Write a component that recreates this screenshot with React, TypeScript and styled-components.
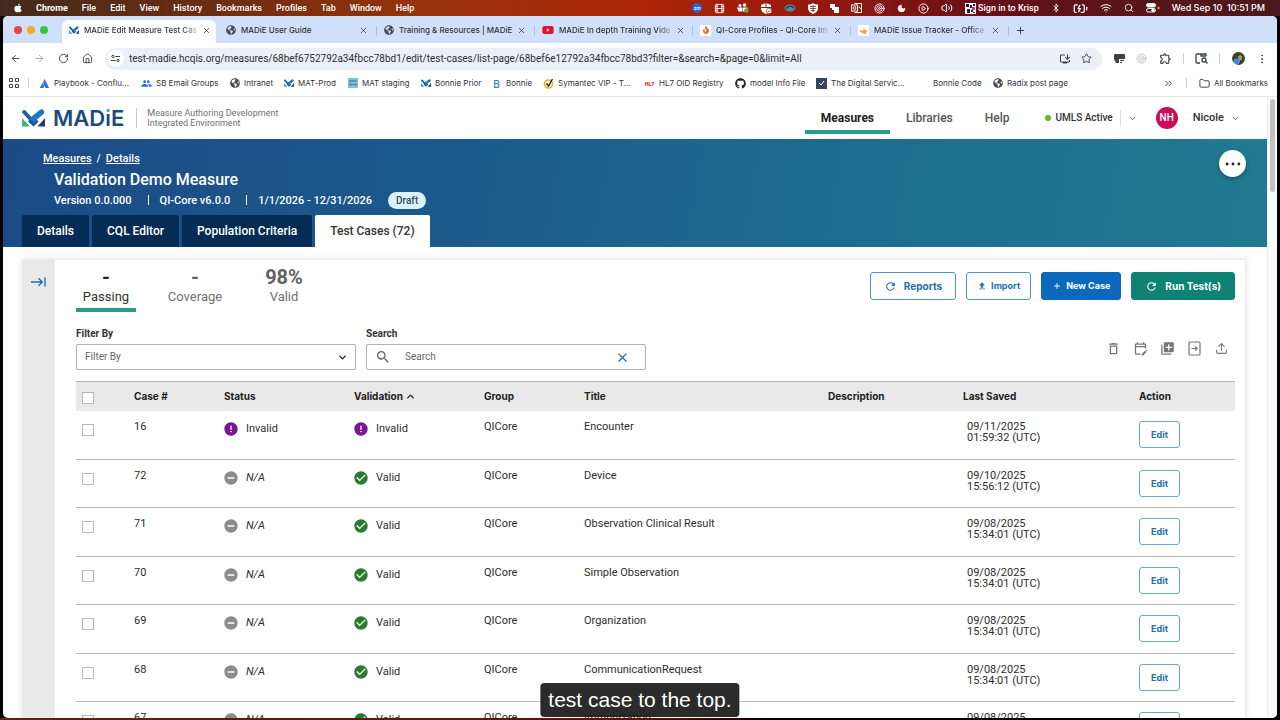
import React from "react";
import styled, { createGlobalStyle, css } from "styled-components";
import {
  ArrowLeft, ArrowRight, RotateCw, House, Star, EllipsisVertical, X, Plus,
  ChevronDown, ChevronUp, ChevronsRight, Folder, Search, Moon, CirclePlay, Volume2, Bluetooth,
  BatteryCharging, Wifi, Film, Upload, Ellipsis, Target,
} from "lucide-react";
import { FaApple, FaGithub, FaYoutube, FaFire, FaGlobeAmericas, FaAtlassian } from "react-icons/fa";
import {
  MdRefresh, MdUpload, MdOutlineDelete, MdOutlineEditCalendar, MdLibraryAdd, MdSearch,
  MdError, MdCheckCircle, MdRemoveCircle, MdAdd, MdGroup, MdClose, MdOutlineExtension,
  MdOutlineInstallDesktop,
} from "react-icons/md";

const ui = `Inter, "Liberation Sans", sans-serif`;
const app = `Roboto, "Liberation Sans", sans-serif`;

const GlobalStyle = createGlobalStyle`
  *, *::before, *::after { box-sizing: border-box; }
  body { margin: 0; background: #000; font-family: ${app}; color: #333; }
  button, input, select { font: inherit; color: inherit; margin: 0; }
  button { padding: 0; border: 0; background: none; cursor: pointer; }
  a { color: inherit; text-decoration: none; }
  svg { display: block; flex: none; }
`;

/* ---------- desktop ---------- */

const Screen = styled.div`
  position: relative;
  height: 100vh;
  display: flex;
  flex-direction: column;
  overflow: hidden;
  padding-bottom: 2px;
  background: linear-gradient(90deg, #5c2416, #5c1010 50%, #000 61%);
`;

const MenuBar = styled.div`
  flex: none;
  height: 16px;
  display: flex;
  align-items: center;
  justify-content: space-between;
  padding: 0 15px 0 13px;
  font: 500 9px/16px ${app};
  color: #fff;
  background: linear-gradient(90deg, #43291d, #6b2d12 16%, #96330c 33%, #ad2505 50%, #9a1a0c 62%, #641018 78%, #4a1a1c);
`;

const MenuGroup = styled.div<{ $gap: number }>`
  display: flex;
  align-items: center;
  gap: ${(p) => p.$gap}px;
`;

const MenuName = styled.span`
  font-weight: 700;
`;

const Clock = styled.time`
  font-family: ${ui};
`;

const ZoomBadge = styled.span`
  width: 10px;
  height: 10px;
  border-radius: 5px;
  background: #2463d8;
  font-size: 5px;
  line-height: 10px;
  text-align: center;
`;

const Krisp = styled.span`
  display: flex;
  align-items: center;
  gap: 2px;
`;

const Desktop = styled.div`
  flex: 1;
  min-height: 0;
  display: flex;
  padding: 0 3px;
  background: #000;
`;

const BrowserWindow = styled.div`
  flex: 1;
  min-width: 0;
  display: flex;
  flex-direction: column;
  overflow: hidden;
  border-radius: 5px;
  background: #fff;
  font-family: ${ui};
`;

/* ---------- browser chrome ---------- */

const TabStrip = styled.div`
  flex: none;
  height: 27px;
  display: flex;
  align-items: stretch;
  padding-top: 4px;
  background: #d0dffa;
`;

const Lights = styled.div`
  display: flex;
  align-items: center;
  gap: 5px;
  width: 59px;
  padding: 0 0 4px 11px;
`;

const Light = styled.span<{ $color: string }>`
  width: 8px;
  height: 8px;
  border-radius: 4px;
  background: ${(p) => p.$color};
`;

const Tab = styled.div<{ $active?: boolean }>`
  flex: 0 1 158px;
  min-width: 0;
  display: flex;
  align-items: center;
  gap: 5px;
  padding: 0 9px 3px 7px;
  font: 500 8px/12px ${ui};
  color: #30343a;
  background: linear-gradient(#a9bfe6, #a9bfe6) right 6px / 1px 10px no-repeat;
  ${(p) => p.$active && css`
    flex-basis: 154px;
    margin-right: 3px;
    padding-right: 7px;
    border-radius: 6px 6px 0 0;
    background: #fff;
  `}
`;

const TabTitle = styled.span<{ $fade?: boolean }>`
  white-space: nowrap;
  ${(p) => p.$fade && css`mask-image: linear-gradient(90deg, #000 88%, rgba(0, 0, 0, 0.2));`}
`;

const CloseTab = styled.button`
  display: flex;
  margin-left: auto;
`;

const NewTab = styled.button`
  display: flex;
  align-items: center;
  padding: 0 6px 3px;
  color: #333;
`;

const Toolbar = styled.div`
  flex: none;
  height: 31px;
  display: flex;
  align-items: center;
  padding: 0 9px 0 7px;
  color: #3c4043;
`;

const NavButtons = styled.div`
  display: flex;
  gap: 13px;
  width: 95px;
`;

const ToolButton = styled.button<{ $dim?: boolean }>`
  display: flex;
  opacity: ${(p) => (p.$dim ? 0.5 : 1)};
`;

const Omnibox = styled.div`
  flex: 1;
  min-width: 0;
  height: 22px;
  display: flex;
  align-items: center;
  gap: 10px;
  padding: 0 10px 0 2px;
  border-radius: 11px;
  background: #ebf0f8;
`;

const SiteInfo = styled.button`
  display: grid;
  place-items: center;
  width: 17px;
  height: 17px;
  margin-right: -5px;
  border-radius: 9px;
  background: #fff;
`;

const UrlInput = styled.input`
  flex: 1;
  min-width: 0;
  border: 0;
  padding: 0;
  outline: 0;
  background: none;
  font: 10px/14px ${app};
  color: #2b2f33;
`;

const Extensions = styled.div`
  display: flex;
  align-items: center;
  justify-content: space-between;
  width: 154px;
  margin-left: 12px;
`;

const Divider = styled.span<{ $h: number; $color?: string }>`
  flex: none;
  width: 1px;
  height: ${(p) => p.$h}px;
  background: ${(p) => p.$color ?? "#c4d3ee"};
`;

const Profile = styled.span`
  width: 13px;
  height: 13px;
  border-radius: 7px;
  background: radial-gradient(circle at 35% 75%, #4a86d8 0 25%, transparent 26%), radial-gradient(circle at 62% 45%, #b98a6c 0 22%, transparent 23%), #33462c;
`;

const BookmarkBar = styled.div`
  flex: none;
  height: 23px;
  display: flex;
  align-items: center;
  padding: 0 9px 4px 6px;
  border-bottom: 1px solid #e3e5e8;
  font-size: 8px;
  line-height: 12px;
  color: #30343a;
  white-space: nowrap;
`;

const Bookmark = styled.a<{ $w?: number }>`
  flex: none;
  display: flex;
  align-items: center;
  gap: 4px;
  width: ${(p) => (p.$w ? `${p.$w}px` : "auto")};
`;

const BookmarkIcon = styled.span`
  display: grid;
  place-items: center;
  width: 11px;
  height: 11px;
`;

const LetterMark = styled.span<{ $color: string; $small?: boolean }>`
  font-weight: ${(p) => (p.$small ? 800 : 500)};
  font-size: ${(p) => (p.$small ? 5 : 10)}px;
  color: ${(p) => p.$color};
`;

const SquareMark = styled.span<{ $color: string }>`
  display: grid;
  place-items: center;
  width: 11px;
  height: 11px;
  background: ${(p) => p.$color};
  color: #fff;
`;

const BookmarkEnd = styled.div`
  display: flex;
  align-items: center;
  gap: 12px;
  margin-left: auto;
`;

/* ---------- page ---------- */

const Viewport = styled.div`
  flex: 1;
  min-height: 0;
  display: flex;
  font-family: ${app};
`;

const Page = styled.div`
  flex: 1;
  min-width: 0;
  overflow: hidden;
`;

const ScrollTrack = styled.div`
  width: 10px;
  padding: 2px 2px 0;
  border-left: 1px solid #ececec;
  background: #fafafa;
`;

const ScrollThumb = styled.div`
  height: 93px;
  border-radius: 3px;
  background: #c1c1c1;
`;

const Header = styled.header`
  height: 42px;
  display: flex;
  align-items: center;
  padding: 0 27px 0 19px;
`;

const Brand = styled.a`
  display: flex;
  align-items: center;
  gap: 8px;
  font: 600 22px/24px ${ui};
  color: #1e4b7e;
`;

const BrandI = styled.span`
  color: transparent;
  background: linear-gradient(#2ba898 9px, #1e4b7e 9px);
  background-clip: text;
`;

const Tagline = styled.p`
  margin: 0 auto 0 12px;
  padding-left: 10px;
  border-left: 1px solid #c9c9c9;
  font-size: 9px;
  line-height: 10px;
  color: #707070;
`;

const MainNav = styled.nav`
  display: flex;
  height: 100%;
`;

const NavLink = styled.a<{ $active?: boolean }>`
  height: 37px;
  padding: 14px 16px 0;
  font-size: 12px;
  line-height: 14px;
  font-weight: ${(p) => (p.$active ? 700 : 500)};
  color: ${(p) => (p.$active ? "#222" : "#555")};
  border-bottom: 4px solid ${(p) => (p.$active ? "#2b9b8a" : "transparent")};
`;

const UserArea = styled.div`
  display: flex;
  align-items: center;
  gap: 7px;
  margin-left: 20px;
  font-size: 11px;
  font-weight: 500;
  line-height: 14px;
`;

const UserStatus = styled.span`
  display: flex;
  align-items: center;
  gap: 4px;
  font-size: 10px;
`;

const StatusDot = styled.span`
  width: 6px;
  height: 6px;
  border-radius: 3px;
  background: #68b42e;
`;

const Avatar = styled.span`
  width: 22px;
  height: 22px;
  margin: 0 8px 0 12px;
  border-radius: 11px;
  background: #c90d58;
  color: #fff;
  font-size: 10px;
  line-height: 22px;
  text-align: center;
`;

const Hero = styled.section`
  height: 108px;
  display: flex;
  flex-direction: column;
  padding: 12px 21px 0 19px;
  color: #fff;
  background: linear-gradient(100deg, #1c4a86, #1b5a8b 35%, #1d698f 60%, #217a92);
`;

const HeroTop = styled.div`
  display: flex;
  justify-content: space-between;
`;

const HeroText = styled.div`
  padding-left: 32px;
`;

const Crumbs = styled.nav`
  display: flex;
  gap: 5px;
  margin-left: -11px;
  font-size: 11px;
  line-height: 15px;
  font-weight: 500;
  a { text-decoration: underline; }
`;

const Title = styled.h1`
  margin: 4px 0 1px;
  font-size: 16px;
  line-height: 20px;
  font-weight: 500;
`;

const Meta = styled.div`
  display: flex;
  align-items: center;
  gap: 16px;
  font-size: 11px;
  line-height: 19px;
  font-weight: 500;
  white-space: nowrap;
`;

const MetaItem = styled.span`
  & + & { padding-left: 12px; background: linear-gradient(#fff, #fff) left 4px / 1px 10px no-repeat; }
`;

const Draft = styled.span`
  height: 17px;
  padding: 0 8px;
  border-radius: 9px;
  background: #daf2fb;
  color: #3a4a55;
  font-size: 10px;
  line-height: 17px;
`;

const MoreButton = styled.button`
  display: grid;
  place-items: center;
  width: 27px;
  height: 27px;
  margin-top: -1px;
  border-radius: 14px;
  background: #fff;
  color: #222;
  box-shadow: 0 2px 4px rgba(0, 0, 0, 0.3);
`;

const PageTabs = styled.div`
  display: flex;
  gap: 3px;
  margin-top: auto;
`;

const PageTab = styled.button<{ $active?: boolean }>`
  height: 32px;
  padding: 0 15px;
  border-radius: 2px 2px 0 0;
  font-size: 12px;
  line-height: 14px;
  font-weight: 500;
  color: ${(p) => (p.$active ? "#333" : "#fff")};
  background: ${(p) => (p.$active ? "#fff" : "#052c55")};
`;

const Card = styled.main`
  display: flex;
  margin: 12px 21px 0 19px;
  border: 1px solid #ebebeb;
  border-left: 0;
  box-shadow: 0 0 8px rgba(0, 0, 0, 0.1);
`;

const Rail = styled.aside`
  width: 33px;
  padding: 15px 8px 0;
  background: #e9e9e9;
`;

const Body = styled.div`
  flex: 1;
  min-width: 0;
  display: flex;
  flex-direction: column;
  gap: 16px;
  padding: 7px 10px 0 21px;
`;

const Row = styled.div`
  display: flex;
  justify-content: space-between;
  align-items: flex-start;
`;

const Stats = styled.div`
  display: flex;
  gap: 29px;
`;

const Stat = styled.button<{ $active?: boolean }>`
  width: 60px;
  font-size: 13px;
  line-height: 18px;
  text-align: center;
  color: ${(p) => (p.$active ? "#333" : "#707070")};
  border-bottom: 4px solid ${(p) => (p.$active ? "#2b9b8a" : "transparent")};
  padding-bottom: 2px;
  strong { display: block; font-size: 20px; line-height: 20px; padding-bottom: 1px; color: ${(p) => (p.$active ? "#222" : "#626262")}; }
`;

const Actions = styled.div`
  display: flex;
  gap: 10px;
  padding-top: 5px;
`;

const ActionButton = styled.button<{ $tone?: "blue" | "green"; $large?: boolean }>`
  height: 28px;
  display: flex;
  align-items: center;
  gap: ${(p) => (p.$large ? 7 : 4)}px;
  padding: 0 ${(p) => (p.$large ? 13 : 10)}px;
  border: 1px solid ${(p) => (p.$tone === "blue" ? "#0a68bd" : p.$tone === "green" ? "#0f8275" : "#4f95d0")};
  border-radius: 3px;
  background: ${(p) => (p.$tone === "blue" ? "#0a68bd" : p.$tone === "green" ? "#0f8275" : "#fff")};
  color: ${(p) => (p.$tone ? "#fff" : "#2070b4")};
  font: 700 ${(p) => (p.$large ? 10 : 9)}px/14px ${ui};
`;

const Filters = styled.div`
  display: flex;
  gap: 10px;
`;

const Field = styled.div`
  width: 280px;
  label { display: block; font-size: 10px; line-height: 12px; font-weight: 700; margin-bottom: 4px; }
`;

const Box = styled.div`
  height: 26px;
  display: flex;
  align-items: center;
  padding: 0 7px 0 8px;
  border: 1px solid #b0b0b0;
  border-radius: 2px;
  font-size: 10px;
  line-height: 14px;
  color: #666;
`;

const FilterSelect = styled.select`
  flex: 1;
  appearance: none;
  border: 0;
  outline: 0;
  background: none;
`;

const SearchInput = styled.input`
  flex: 1;
  min-width: 0;
  margin-left: 14px;
  padding: 0;
  border: 0;
  outline: 0;
  background: none;
  &::placeholder { color: #666; opacity: 1; }
`;

const ClearButton = styled.button`
  display: flex;
  margin-right: 8px;
  color: #2070b4;
`;

const IconTools = styled.div`
  display: flex;
  gap: 12px;
  padding: 13px 6px 0 0;
  color: #757575;
`;

const IconButton = styled.button`
  display: grid;
  place-items: center;
  width: 15px;
  height: 15px;
`;

const Table = styled.table`
  width: 100%;
  margin-top: -5px;
  table-layout: fixed;
  border-collapse: separate;
  border-spacing: 0;
  border-top: 1px solid #b5b5b5;
  text-align: left;
  font-size: 11px;
  line-height: 14px;
  color: #2d2d2d;
`;

const Th = styled.th<{ $w?: number; $top?: number }>`
  width: ${(p) => (p.$w ? `${p.$w}px` : "auto")};
  height: 29px;
  padding: ${(p) => p.$top ?? 7}px 0 0 8px;
  vertical-align: top;
  background: #e9e9e9;
  font: 700 10px/14px ${ui};
  color: #222;
`;

const Sort = styled.span`
  display: flex;
  align-items: center;
  gap: 2px;
`;

const BodyRow = styled.tr`
  height: 49px;
  &:nth-child(even) { height: 48px; }
`;

const Td = styled.td<{ $top?: number }>`
  padding: ${(p) => p.$top ?? 9}px 0 0 8px;
  vertical-align: top;
  border-bottom: 1px solid #b9b9b9;
`;

const Check = styled.input`
  appearance: none;
  display: block;
  width: 12px;
  height: 12px;
  margin-left: -2px;
  border: 1px solid #b3b8c2;
  background: #fff;
`;

const Flag = styled.span<{ $na?: boolean }>`
  display: flex;
  align-items: center;
  gap: 7px;
  margin-left: -1px;
  line-height: 16px;
  font-style: ${(p) => (p.$na ? "italic" : "normal")};
`;

const Saved = styled.time`
  display: block;
  padding-left: 4px;
  line-height: 11px;
`;

const EditButton = styled.button`
  width: 41px;
  height: 27px;
  border: 1px solid #6aa6da;
  border-radius: 3px;
  background: #fff;
  color: #2070b4;
  font: 700 9px/12px ${ui};
`;

const Caption = styled.div`
  position: absolute;
  left: 50%;
  bottom: 3px;
  transform: translateX(-50%);
  padding: 4px 8px;
  border-radius: 4px;
  background: rgba(32, 32, 32, 0.95);
  color: #fff;
  font: 21px/26px "Liberation Sans", sans-serif;
  white-space: nowrap;
`;

const MadieMark = ({ width = 11 }: { width?: number }) => (
  <svg width={width} height={Math.round(width * 0.78)} viewBox="0 0 23 18" aria-hidden="true">
    <path d="M2.200 3 10 11.500" stroke="#1e5fa8" strokeWidth="4" strokeLinecap="round" />
    <path d="M10.500 10.500 19.500 3.200" stroke="#1d74c9" strokeWidth="5.500" strokeLinecap="round" />
    <path d="M0 9v8.500h8z" fill="#3bb58c" />
    <path d="M7 11.500l4.500 4 4-4" stroke="#1d4f96" strokeWidth="3" fill="none" />
    <path d="M23 9v8.500h-7.500z" fill="#1d3f74" />
  </svg>
);

const SiteTune = () => (
  <svg width="9" height="9" viewBox="0 0 9 9" fill="none" stroke="#3c4043" aria-hidden="true">
    <circle cx="2" cy="2.500" r="1.200" /><path d="M4.500 2.500H9M0 6.500h4.500" /><circle cx="7" cy="6.500" r="1.200" />
  </svg>
);

const GridIcon = () => (
  <svg width="10" height="10" viewBox="0 0 10 10" fill="none" stroke="#444" aria-hidden="true">
    <path d="M.5.5h3v3h-3zM6.500.5h3v3h-3zM.5 6.500h3v3h-3zM6.500 6.500h3v3h-3z" />
  </svg>
);

const ExpandIcon = () => (
  <svg width="16" height="14" viewBox="0 0 16 14" fill="none" stroke="#2070b4" strokeWidth="1.400" aria-hidden="true">
    <path d="M1 7h11M8.500 3.200 12.300 7 8.500 10.800M15 2.500v9" />
  </svg>
);

const CopyToIcon = () => (
  <svg width="13" height="15" viewBox="0 0 13 15" fill="none" stroke="currentColor" strokeWidth="1.200" aria-hidden="true">
    <rect x="1" y="1" width="11" height="13" rx="1" /><path d="M3.500 7.500h5.500M7 5.300l2.200 2.200L7 9.700" />
  </svg>
);

const ControlCenter = () => (
  <svg width="14" height="10" viewBox="0 0 14 10" fill="none" stroke="#fff" aria-hidden="true">
    <rect x=".5" y=".5" width="9" height="3.500" rx="1.700" fill="#fff" /><rect x=".5" y="5.500" width="9" height="3.500" rx="1.700" /><circle cx="7" cy="7.200" r="1.200" fill="#fff" />
    <circle cx="12.500" cy="5" r="1.300" fill="#f08a24" stroke="none" />
  </svg>
);

const ShieldTick = () => (
  <svg width="11" height="11" viewBox="0 0 11 11" aria-hidden="true">
    <path d="M0 2 5 0l5 2v3c0 3-2 5-5 6C2 10 0 8 0 5z" fill="#fff" /><path d="M5 0v5M0 4.500h10" stroke="#8c1a0e" />
    <circle cx="8" cy="8" r="2.800" fill="#fff" stroke="#8c1a0e" strokeWidth=".6" /><path d="M6.700 8l1 1 1.600-1.800" stroke="#8c1a0e" strokeWidth=".8" fill="none" />
  </svg>
);

const ShieldBars = () => (
  <svg width="10" height="11" viewBox="0 0 10 11" aria-hidden="true">
    <path d="M0 1.500C2 1.500 4 1 5 0c1 1 3 1.500 5 1.500V5c0 3-2 5-5 6C2 10 0 8 0 5z" fill="#fff" /><path d="M2 3.500h6M2 5.500h6M3 7.500h4M5 2v7" stroke="#8c1a0e" strokeWidth=".8" />
  </svg>
);

const MailMark = () => (
  <svg width="11" height="10" viewBox="0 0 11 10" fill="none" stroke="#fff" aria-hidden="true">
    <path d="M3.500.5h7v9h-7" /><path d="M7.500 4l3 2" /><rect x=".5" y="2" width="6" height="6" fill="#7a1612" /><circle cx="3.500" cy="5" r="1.400" />
  </svg>
);

const PersonGroup = () => (
  <svg width="12" height="10" viewBox="0 0 12 10" fill="#fff" aria-hidden="true">
    <circle cx="3" cy="2.500" r="1.500" /><circle cx="7.500" cy="2" r="1.700" /><path d="M0 4.500h5v4H1.500zM5.500 4.500h5v4h-5z" /><circle cx="9.500" cy="7.500" r="2.300" fill="#4cb43c" />
  </svg>
);

const CloudMark = () => (
  <svg width="12" height="8" viewBox="0 0 12 8" fill="none" aria-hidden="true">
    <ellipse cx="6" cy="4" rx="5.500" ry="3.500" fill="#4a8ea6" /><path d="M2 5c2-4 6-3 8-1" stroke="#31414f" strokeWidth="1.500" />
  </svg>
);

const BlocksMark = () => (
  <svg width="9" height="9" viewBox="0 0 9 9" fill="#fff" aria-hidden="true"><path d="M0 0h5v3h4v6H4V6H2V4H0z" /></svg>
);

const KrispMark = () => (
  <svg width="11" height="11" viewBox="0 0 11 11" aria-hidden="true">
    <rect width="11" height="11" fill="#fff" /><path d="M1 1h3v3H1zM5 2h2v3H5zM8 1h2v2H8zM2 6h3v4H2zM6 7h2v2H6zM8 9h2v1H8z" fill="#2a1a30" /><path d="M7 4h3v3H7z" fill="#d0346c" />
  </svg>
);

const PawMark = () => (
  <svg width="11" height="11" viewBox="0 0 11 11" aria-hidden="true">
    <rect width="11" height="11" fill="#fff" /><path d="M1 5l4 1 1-3 1 2 3 1-2 1v2L4 8z" fill="#e9a13a" />
  </svg>
);

const FireMark = () => (
  <SquareMark $color="#fff"><FaFire size={8} color="#ee6a2c" /></SquareMark>
);

const AgencyMark = () => (
  <svg width="10" height="10" viewBox="0 0 10 10" aria-hidden="true">
    <rect width="10" height="10" fill="#7fc4d2" /><path d="M1.500 3h2M4.500 3h2M7.500 3h1M1.500 6.500h2M4.500 6.500h1M6.500 6.500h2" stroke="#1d6c88" strokeWidth="1.500" />
  </svg>
);

const DigitalMark = () => (
  <SquareMark $color="#33475c">
    <svg width="7" height="6" viewBox="0 0 7 6" fill="none" stroke="#fff" aria-hidden="true"><path d="M1 3l2 2 3-4" /></svg>
  </SquareMark>
);

const SymantecMark = () => (
  <svg width="11" height="11" viewBox="0 0 11 11" fill="none" aria-hidden="true">
    <circle cx="5.500" cy="6" r="4" stroke="#f0b323" strokeWidth="1.700" /><path d="M3.500 5.500l2 2.500L9.500 1" stroke="#222" strokeWidth="1.400" />
  </svg>
);

const ExtensionMark = () => (
  <svg width="11" height="10" viewBox="0 0 11 10" fill="#3c4043" aria-hidden="true"><path d="M1 0h9a1 1 0 0 1 1 1v4H5v4H2L1 7 0 5V1zM6 6h4v1H6zM6 8h2v1H6z" /></svg>
);

const PanelSearch = () => (
  <svg width="13" height="11" viewBox="0 0 13 11" fill="none" stroke="#3c4043" strokeWidth="1.300" aria-hidden="true">
    <path d="M5 10H2a1 1 0 0 1-1-1V2a1 1 0 0 1 1-1h9v2" /><path d="M6 1v2h5" /><circle cx="9" cy="7" r="2" /><path d="M10.500 8.500 12.500 10.500" />
  </svg>
);

const globe = <FaGlobeAmericas size={10} color="#4a4e54" />;

const menus = ["File", "Edit", "View", "History", "Bookmarks", "Profiles", "Tab", "Window", "Help"];

const browserTabs = [
  { title: "MADiE Edit Measure Test Cas", icon: <MadieMark width={10} />, active: true, fade: true },
  { title: "MADiE User Guide", icon: globe },
  { title: "Training & Resources | MADiE", icon: globe },
  { title: "MADiE In depth Training Vide", icon: <FaYoutube size={12} color="#e0122f" />, fade: true },
  { title: "QI-Core Profiles - QI-Core Im", icon: <FireMark />, fade: true },
  { title: "MADiE Issue Tracker - Office", icon: <PawMark />, fade: true },
];

const bookmarks = [
  { label: "Playbook - Conflu...", w: 102, icon: <FaAtlassian size={9} color="#2a6fdb" /> },
  { label: "SB Email Groups", w: 88, icon: <MdGroup size={11} color="#2a6fdb" /> },
  { label: "Intranet", w: 54, icon: globe },
  { label: "MAT-Prod", w: 64, icon: <MadieMark width={10} /> },
  { label: "MAT staging", w: 73, icon: <AgencyMark /> },
  { label: "Bonnie Prior", w: 71, icon: <MadieMark width={10} /> },
  { label: "Bonnie", w: 52, icon: <LetterMark $color="#3b78b8">B</LetterMark> },
  { label: "Symantec VIP - T...", w: 101, icon: <SymantecMark /> },
  { label: "HL7 OID Registry", w: 91, icon: <LetterMark $color="#d42a2a" $small>HL7</LetterMark> },
  { label: "model Info File", w: 81, icon: <FaGithub size={11} color="#222" /> },
  { label: "The Digital Servic...", w: 102, icon: <DigitalMark /> },
  { label: "Bonnie Code", w: 74, icon: null },
  { label: "Radix post page", w: 90, icon: globe },
];

type Case = { id: number; title: string; date: string; time: string; invalid?: boolean };

const cases: Case[] = [
  { id: 16, title: "Encounter", date: "09/11/2025", time: "01:59:32 (UTC)", invalid: true },
  { id: 72, title: "Device", date: "09/10/2025", time: "15:56:12 (UTC)" },
  { id: 71, title: "Observation Clinical Result", date: "09/08/2025", time: "15:34:01 (UTC)" },
  { id: 70, title: "Simple Observation", date: "09/08/2025", time: "15:34:01 (UTC)" },
  { id: 69, title: "Organization", date: "09/08/2025", time: "15:34:01 (UTC)" },
  { id: 68, title: "CommunicationRequest", date: "09/08/2025", time: "15:34:01 (UTC)" },
  { id: 67, title: "Immunization", date: "09/08/2025", time: "15:34:01 (UTC)" },
];

const invalidFlag = <Flag><MdError size={16} color="#7c1592" />Invalid</Flag>;

export default function App() {
  return (
    <Screen>
      <GlobalStyle />
      <MenuBar>
        <MenuGroup $gap={13}>
          <FaApple size={10} />
          <MenuGroup $gap={14}>
            <MenuName>Chrome</MenuName>
            {menus.map((m) => <span key={m}>{m}</span>)}
          </MenuGroup>
        </MenuGroup>
        <MenuGroup $gap={12}>
          <ZoomBadge>zm</ZoomBadge>
          <Film size={11} />
          <PersonGroup />
          <ShieldTick />
          <CloudMark />
          <ShieldBars />
          <BlocksMark />
          <MailMark />
          <Target size={11} />
          <Moon size={9} fill="#fff" />
          <CirclePlay size={11} />
          <Volume2 size={12} />
          <Krisp><KrispMark />Sign in to Krisp</Krisp>
          <Bluetooth size={10} />
          <BatteryCharging size={15} />
          <Wifi size={12} />
          <Search size={10} />
          <ControlCenter />
          <Clock>Wed Sep 10&nbsp; 10:51 PM</Clock>
        </MenuGroup>
      </MenuBar>

      <Desktop>
        <BrowserWindow>
          <TabStrip>
            <Lights>
              <Light $color="#e8434f" /><Light $color="#efac2c" /><Light $color="#2fc93f" />
            </Lights>
            {browserTabs.map((t) => (
              <Tab key={t.title} $active={t.active}>
                {t.icon}
                <TabTitle $fade={t.fade}>{t.title}</TabTitle>
                <CloseTab aria-label="Close tab"><X size={9} /></CloseTab>
              </Tab>
            ))}
            <NewTab aria-label="New tab"><Plus size={11} /></NewTab>
          </TabStrip>

          <Toolbar>
            <NavButtons>
              <ToolButton aria-label="Back"><ArrowLeft size={11} /></ToolButton>
              <ToolButton aria-label="Forward" $dim><ArrowRight size={11} /></ToolButton>
              <ToolButton aria-label="Reload"><RotateCw size={11} /></ToolButton>
              <ToolButton aria-label="Home"><House size={11} /></ToolButton>
            </NavButtons>
            <Omnibox>
              <SiteInfo aria-label="Site information"><SiteTune /></SiteInfo>
              <UrlInput
                aria-label="Address"
                defaultValue="test-madie.hcqis.org/measures/68bef6752792a34fbcc78bd1/edit/test-cases/list-page/68bef6e12792a34fbcc78bd3?filter=&search=&page=0&limit=All"
              />
              <ToolButton aria-label="Install"><MdOutlineInstallDesktop size={12} /></ToolButton>
              <ToolButton aria-label="Bookmark this page"><Star size={11} /></ToolButton>
            </Omnibox>
            <Extensions>
              <ExtensionMark />
              <Target size={11} color="#c5c5c5" />
              <MdOutlineExtension size={13} />
              <Divider $h={11} />
              <PanelSearch />
              <Divider $h={11} />
              <Profile />
              <EllipsisVertical size={12} />
            </Extensions>
          </Toolbar>

          <BookmarkBar>
            <Bookmark as="span" $w={19}><GridIcon /></Bookmark>
            <Bookmark as="span" $w={11}><Divider $h={10} /></Bookmark>
            {bookmarks.map((b) => (
              <Bookmark key={b.label} $w={b.w} href="#">
                <BookmarkIcon>{b.icon}</BookmarkIcon>
                {b.label}
              </Bookmark>
            ))}
            <BookmarkEnd>
              <ChevronsRight size={11} />
              <Divider $h={10} />
              <Bookmark href="#"><Folder size={11} />All Bookmarks</Bookmark>
            </BookmarkEnd>
          </BookmarkBar>

          <Viewport>
            <Page>
              <Header>
                <Brand href="#">
                  <MadieMark width={23} />
                  <span>MAD<BrandI>i</BrandI>E</span>
                </Brand>
                <Tagline>Measure Authoring Development<br />Integrated Environment</Tagline>
                <MainNav>
                  <NavLink href="#" $active>Measures</NavLink>
                  <NavLink href="#">Libraries</NavLink>
                  <NavLink href="#">Help</NavLink>
                </MainNav>
                <UserArea>
                  <UserStatus><StatusDot />UMLS Active</UserStatus>
                  <Divider $h={16} $color="#ddd" />
                  <ChevronDown size={9} />
                  <Avatar>NH</Avatar>
                  <span>Nicole</span>
                  <ChevronDown size={9} />
                </UserArea>
              </Header>

              <Hero>
                <HeroTop>
                  <HeroText>
                    <Crumbs><a href="#">Measures</a><span>/</span><a href="#">Details</a></Crumbs>
                    <Title>Validation Demo Measure</Title>
                    <Meta>
                      <MetaItem>Version 0.0.000</MetaItem>
                      <MetaItem>QI-Core v6.0.0</MetaItem>
                      <MetaItem>1/1/2026 - 12/31/2026</MetaItem>
                      <Draft>Draft</Draft>
                    </Meta>
                  </HeroText>
                  <MoreButton aria-label="More actions"><Ellipsis size={20} strokeWidth={1.5} /></MoreButton>
                </HeroTop>
                <PageTabs>
                  <PageTab>Details</PageTab>
                  <PageTab>CQL Editor</PageTab>
                  <PageTab>Population Criteria</PageTab>
                  <PageTab $active>Test Cases (72)</PageTab>
                </PageTabs>
              </Hero>

              <Card>
                <Rail><ToolButton aria-label="Expand panel"><ExpandIcon /></ToolButton></Rail>
                <Body>
                  <Row>
                    <Stats>
                      <Stat $active><strong>-</strong>Passing</Stat>
                      <Stat><strong>-</strong>Coverage</Stat>
                      <Stat><strong>98%</strong>Valid</Stat>
                    </Stats>
                    <Actions>
                      <ActionButton $large><MdRefresh size={13} />Reports</ActionButton>
                      <ActionButton><MdUpload size={10} />Import</ActionButton>
                      <ActionButton $tone="blue"><MdAdd size={10} />New Case</ActionButton>
                      <ActionButton $tone="green" $large><MdRefresh size={13} />Run Test(s)</ActionButton>
                    </Actions>
                  </Row>
                  <Row>
                    <Filters>
                      <Field>
                        <label htmlFor="filter-by">Filter By</label>
                        <Box>
                          <FilterSelect id="filter-by" defaultValue=""><option value="">Filter By</option></FilterSelect>
                          <ChevronDown size={11} color="#222" strokeWidth={3} />
                        </Box>
                      </Field>
                      <Field>
                        <label htmlFor="search">Search</label>
                        <Box>
                          <MdSearch size={16} />
                          <SearchInput id="search" placeholder="Search" />
                          <ClearButton aria-label="Clear search"><MdClose size={15} /></ClearButton>
                        </Box>
                      </Field>
                    </Filters>
                    <IconTools>
                      <IconButton aria-label="Delete"><MdOutlineDelete size={15} /></IconButton>
                      <IconButton aria-label="Shift dates"><MdOutlineEditCalendar size={15} /></IconButton>
                      <IconButton aria-label="Clone"><MdLibraryAdd size={15} /></IconButton>
                      <IconButton aria-label="Copy to"><CopyToIcon /></IconButton>
                      <IconButton aria-label="Export"><Upload size={13} /></IconButton>
                    </IconTools>
                  </Row>
                  <Table>
                    <thead>
                      <tr>
                        <Th $w={50} $top={10}><Check type="checkbox" aria-label="Select all" /></Th>
                        <Th $w={90}>Case #</Th>
                        <Th $w={130}>Status</Th>
                        <Th $w={130}><Sort>Validation <ChevronUp size={11} strokeWidth={3} /></Sort></Th>
                        <Th $w={100}>Group</Th>
                        <Th>Title</Th>
                        <Th $w={135}>Description</Th>
                        <Th $w={176}>Last Saved</Th>
                        <Th $w={104}>Action</Th>
                      </tr>
                    </thead>
                    <tbody>
                      {cases.map((c) => (
                        <BodyRow key={c.id}>
                          <Td $top={13}><Check type="checkbox" aria-label={`Select case ${c.id}`} /></Td>
                          <Td>{c.id}</Td>
                          <Td $top={10}>
                            {c.invalid ? invalidFlag : <Flag $na><MdRemoveCircle size={16} color="#8d8d8d" />N/A</Flag>}
                          </Td>
                          <Td $top={10}>
                            {c.invalid ? invalidFlag : <Flag><MdCheckCircle size={16} color="#2c7a30" />Valid</Flag>}
                          </Td>
                          <Td>QICore</Td>
                          <Td>{c.title}</Td>
                          <Td />
                          <Td $top={10}><Saved>{c.date}<br />{c.time}</Saved></Td>
                          <Td $top={10}><EditButton>Edit</EditButton></Td>
                        </BodyRow>
                      ))}
                    </tbody>
                  </Table>
                </Body>
              </Card>
            </Page>
            <ScrollTrack><ScrollThumb /></ScrollTrack>
          </Viewport>
        </BrowserWindow>
      </Desktop>
      <Caption>test case to the top.</Caption>
    </Screen>
  );
}
